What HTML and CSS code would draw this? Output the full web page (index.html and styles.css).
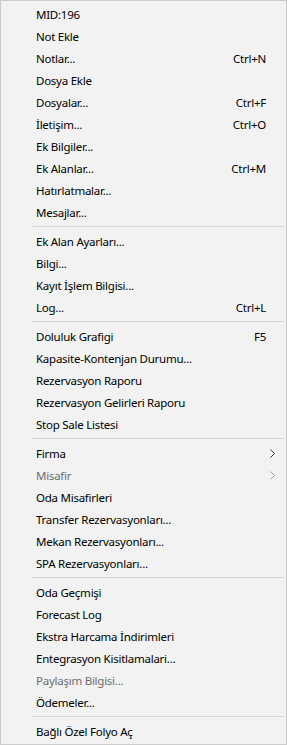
FILE: index.html
```html
<!DOCTYPE html>
<html lang="tr">
<head>
  <meta charset="UTF-8">
  <title>Menü</title>
  <link rel="stylesheet" href="styles.css">
</head>
<body>
  <ul class="menu">
    <li class="item"><span class="label">MID:196</span></li>
    <li class="item"><span class="label">Not Ekle</span></li>
    <li class="item"><span class="label">Notlar...</span><span class="key">Ctrl+N</span></li>
    <li class="item"><span class="label">Dosya Ekle</span></li>
    <li class="item"><span class="label">Dosyalar...</span><span class="key">Ctrl+F</span></li>
    <li class="item"><span class="label">İletişim...</span><span class="key">Ctrl+O</span></li>
    <li class="item"><span class="label">Ek Bilgiler...</span></li>
    <li class="item"><span class="label">Ek Alanlar...</span><span class="key">Ctrl+M</span></li>
    <li class="item"><span class="label">Hatırlatmalar...</span></li>
    <li class="item"><span class="label">Mesajlar...</span></li>
    <li class="sep"></li>
    <li class="item"><span class="label">Ek Alan Ayarları...</span></li>
    <li class="item"><span class="label">Bilgi...</span></li>
    <li class="item"><span class="label">Kayıt İşlem Bilgisi...</span></li>
    <li class="item"><span class="label">Log...</span><span class="key">Ctrl+L</span></li>
    <li class="sep"></li>
    <li class="item"><span class="label">Doluluk Grafigi</span><span class="key">F5</span></li>
    <li class="item"><span class="label">Kapasite-Kontenjan Durumu...</span></li>
    <li class="item"><span class="label">Rezervasyon Raporu</span></li>
    <li class="item"><span class="label">Rezervasyon Gelirleri Raporu</span></li>
    <li class="item"><span class="label">Stop Sale Listesi</span></li>
    <li class="sep"></li>
    <li class="item"><span class="label">Firma</span>
      <svg class="arrow" width="5" height="9" viewBox="0 0 5 9"><path d="M0.5 0.5 L4.5 4.5 L0.5 8.5" fill="none" stroke="#333" stroke-width="1"/></svg>
    </li>
    <li class="item disabled"><span class="label">Misafir</span>
      <svg class="arrow" width="5" height="9" viewBox="0 0 5 9"><path d="M0.5 0.5 L4.5 4.5 L0.5 8.5" fill="none" stroke="#a6a6a6" stroke-width="1"/></svg>
    </li>
    <li class="item"><span class="label">Oda Misafirleri</span></li>
    <li class="item"><span class="label">Transfer Rezervasyonları...</span></li>
    <li class="item"><span class="label">Mekan Rezervasyonları...</span></li>
    <li class="item"><span class="label">SPA Rezervasyonları...</span></li>
    <li class="sep"></li>
    <li class="item"><span class="label">Oda Geçmişi</span></li>
    <li class="item"><span class="label">Forecast Log</span></li>
    <li class="item"><span class="label">Ekstra Harcama İndirimleri</span></li>
    <li class="item"><span class="label">Entegrasyon Kisitlamalari...</span></li>
    <li class="item disabled"><span class="label">Paylaşım Bilgisi...</span></li>
    <li class="item"><span class="label">Ödemeler...</span></li>
    <li class="sep"></li>
    <li class="item"><span class="label">Bağlı Özel Folyo Aç</span></li>
  </ul>
</body>
</html>
```

FILE: styles.css
```css
body { margin: 0; background: #fff; font-family: "Segoe UI", "Noto Sans", "Liberation Sans", sans-serif; font-size: 11.5px; letter-spacing: -0.25px; color: #000; }
.menu { list-style: none; margin: 0; padding: 2px; width: 287px; height: 745px; box-sizing: border-box; background: #f2f2f2; border: 1px solid #cccccc; }
.item { height: 22px; display: flex; align-items: center; padding: 0 18px 0 33px; white-space: nowrap; }
.label { flex: 1; }
.key { text-align: right; }
.arrow { margin-right: -9px; }
.disabled { color: #6d6d6d; }
.sep { height: 7px; margin-left: 29px; position: relative; }
.sep::after { content: ""; position: absolute; left: 0; right: 0; top: 3px; height: 1px; background: #d7d7d7; }
```
